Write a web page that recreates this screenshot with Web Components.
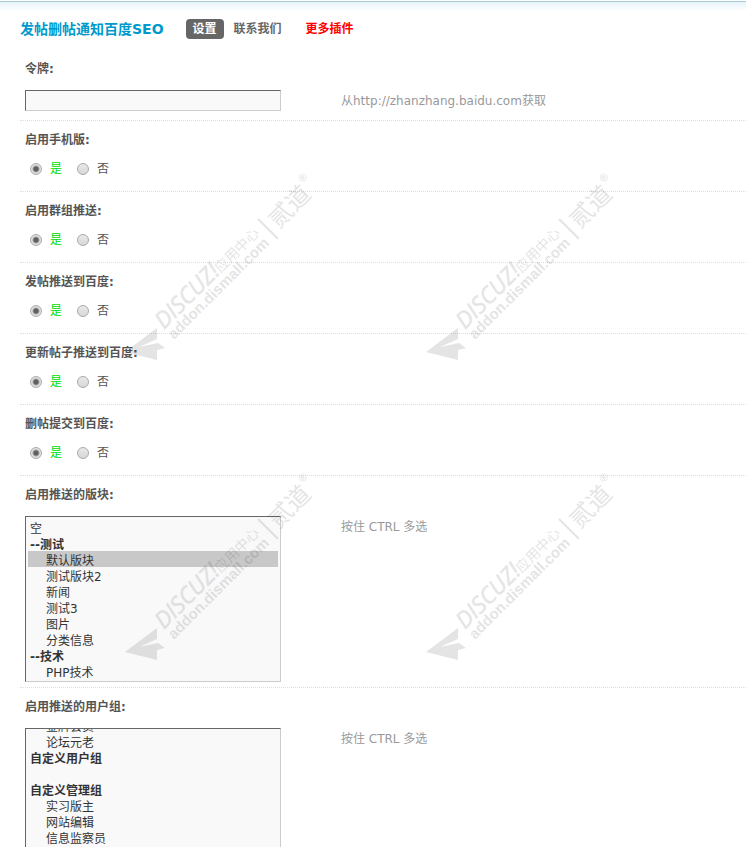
<!DOCTYPE html>
<html lang="zh-CN">
<head>
<meta charset="utf-8">
<title>发帖删帖通知百度SEO</title>
<style>
  body {
    margin: 0;
    background: #fff;
    color: #555;
    font: 12px/16px "DejaVu Sans", "Noto Sans CJK SC", sans-serif;
  }
</style>
</head>
<body>
<admin-page>
  <admin-nav heading="发帖删帖通知百度SEO"></admin-nav>
  <setting-row label="令牌:" tip="从http://zhanzhang.baidu.com获取">
    <token-input label="令牌:"></token-input>
  </setting-row>
  <setting-row label="启用手机版:"><yes-no label="启用手机版:"></yes-no></setting-row>
  <setting-row label="启用群组推送:"><yes-no label="启用群组推送:"></yes-no></setting-row>
  <setting-row label="发帖推送到百度:"><yes-no label="发帖推送到百度:"></yes-no></setting-row>
  <setting-row label="更新帖子推送到百度:"><yes-no label="更新帖子推送到百度:"></yes-no></setting-row>
  <setting-row label="删帖提交到百度:"><yes-no label="删帖提交到百度:"></yes-no></setting-row>
  <setting-row label="启用推送的版块:" tip="按住 CTRL 多选">
    <multi-list name="forums" label="启用推送的版块:"></multi-list>
  </setting-row>
  <setting-row label="启用推送的用户组:" tip="按住 CTRL 多选">
    <multi-list name="groups" label="启用推送的用户组:" scroll="30"></multi-list>
  </setting-row>
</admin-page>

<script>
// 列表数据
const LISTS = {
  forums: [
    { text: '空' },
    { group: '--测试', items: ['默认版块', '测试版块2', '新闻', '测试3', '图片', '分类信息'] },
    { group: '--技术', items: ['PHP技术'] }
  ],
  groups: [
    { group: '会员用户组', items: ['金牌会员', '论坛元老'] },
    { group: '自定义用户组', items: [''] },
    { group: '自定义管理组', items: ['实习版主', '网站编辑', '信息监察员', '审核员'] },
    { group: '系统用户组', items: ['管理员', '超级版主', '版主'] }
  ]
};
const SELECTED = ['默认版块'];

// 页面外框
class AdminPage extends HTMLElement {
  constructor() {
    super();
    this.attachShadow({ mode: 'open' });
  }

  connectedCallback() {
    this.shadowRoot.innerHTML = `
      <style>
        :host {
          display: block;
          position: relative;
          box-sizing: border-box;
          height: 100vh;
          overflow: hidden;
          border-top: 1px solid #fff;
        }
        main {
          padding: 17px 0 0 20px;
          border-top: 1px solid #a9ccd6;
          background: linear-gradient(#e6f3f9, #fff 9px);
        }
      </style>
      <main><slot></slot></main>
      <water-marks></water-marks>
    `;
  }
}
customElements.define('admin-page', AdminPage);

// 标题和导航链接
class AdminNav extends HTMLElement {
  constructor() {
    super();
    this.attachShadow({ mode: 'open' });
  }

  connectedCallback() {
    this.shadowRoot.innerHTML = `
      <style>
        :host { display: flex; align-items: center; height: 20px; margin-bottom: 11px; }
        h1 { margin: 0 22px 0 0; font-size: 14px; line-height: 20px; color: #0099cc; }
        nav { display: flex; align-items: center; }
        a { font-weight: bold; line-height: 20px; color: #666; text-decoration: none; }
        .on { padding: 0 7px; margin-right: 10px; border-radius: 4px; background: #666; color: #fff; }
        .more { margin-left: 24px; color: #f00; }
      </style>
      <h1>${this.getAttribute('heading')}</h1>
      <nav>
        <a class="on" href="#">设置</a>
        <a href="#">联系我们</a>
        <a class="more" href="#">更多插件</a>
      </nav>
    `;
  }
}
customElements.define('admin-nav', AdminNav);

// 一行设置: 标题、控件和提示
class SettingRow extends HTMLElement {
  constructor() {
    super();
    this.attachShadow({ mode: 'open' });
  }

  connectedCallback() {
    this.shadowRoot.innerHTML = `
      <style>
        :host { display: block; padding: 9px 5px 5px; border-bottom: 1px dotted #cfe3ee; }
        h2 { margin: 0 0 11px; font-size: 12px; line-height: 20px; color: #555; }
        div { display: grid; grid-template-columns: 316px 1fr; min-height: 25px; }
        p { margin: 3px 0 0; line-height: 16px; color: #999; }
      </style>
      <h2>${this.getAttribute('label')}</h2>
      <div><slot></slot><p>${this.getAttribute('tip') || ''}</p></div>
    `;
  }
}
customElements.define('setting-row', SettingRow);

// 文本框
class TokenInput extends HTMLElement {
  constructor() {
    super();
    this.attachShadow({ mode: 'open' });
  }

  connectedCallback() {
    this.shadowRoot.innerHTML = `
      <style>
        :host { display: block; }
        input {
          display: block;
          box-sizing: border-box;
          width: 256px;
          height: 21px;
          padding: 2px;
          border: 1px solid;
          border-color: #666 #ccc #ccc #666;
          background: #f9f9f9;
          font: inherit;
        }
      </style>
      <input type="text" aria-label="${this.getAttribute('label')}">
    `;
  }
}
customElements.define('token-input', TokenInput);

// 是 / 否 单选
class YesNo extends HTMLElement {
  constructor() {
    super();
    this.attachShadow({ mode: 'open' });
  }

  connectedCallback() {
    this.shadowRoot.innerHTML = `
      <style>
        :host { display: block; }
        div { display: flex; gap: 15px; padding: 0 5px; }
        label { display: flex; align-items: center; gap: 8px; height: 16px; }
        label:has(:checked) { color: #00dd00; }
        input {
          appearance: none;
          box-sizing: border-box;
          width: 12px;
          height: 12px;
          margin: 0;
          border: 1px solid #aaa;
          border-radius: 50%;
          background: linear-gradient(#e8e8e8, #d8d8d8);
        }
        input:checked { background: radial-gradient(circle, #606060 2px, #e2e2e2 4px); }
      </style>
      <div role="radiogroup" aria-label="${this.getAttribute('label')}">
        <label><input type="radio" name="v" checked>是</label>
        <label><input type="radio" name="v">否</label>
      </div>
    `;
  }
}
customElements.define('yes-no', YesNo);

// 多选列表
class MultiList extends HTMLElement {
  constructor() {
    super();
    this.attachShadow({ mode: 'open' });
  }

  connectedCallback() {
    const option = (t) => `<option${SELECTED.includes(t) ? ' selected' : ''}>${t}</option>`;
    let html = '';
    for (const e of LISTS[this.getAttribute('name')]) {
      html += e.group
        ? `<optgroup label="${e.group}">${e.items.map(option).join('')}</optgroup>`
        : option(e.text);
    }
    this.shadowRoot.innerHTML = `
      <style>
        :host { display: block; }
        select {
          display: block;
          box-sizing: border-box;
          width: 256px;
          height: 166px;
          padding: 2px;
          border: 1px solid;
          border-color: #666 #ccc #ccc #666;
          border-radius: 0;
          outline: 0;
          background: #f9f9f9;
          color: #333;
          font: inherit;
          scrollbar-width: none;
        }
        optgroup { font-weight: bold; }
        option { box-sizing: border-box; height: 16px; min-height: 16px; padding: 0 2px; font-weight: normal; }
        optgroup option { padding-left: 18px; }
        /* 组标题高 18px, 收回到 16px 的行高 */
        optgroup option:first-child { margin-top: -2px; }
        option:checked { background: #c8c8c8 linear-gradient(#c8c8c8, #c8c8c8); color: #333; }
      </style>
      <select multiple size="10" aria-label="${this.getAttribute('label')}">${html}</select>
    `;
    this.shadowRoot.querySelector('select').scrollTop = Number(this.getAttribute('scroll') || 0);
  }
}
customElements.define('multi-list', MultiList);

// 斜向水印
class WaterMarks extends HTMLElement {
  constructor() {
    super();
    this.attachShadow({ mode: 'open' });
  }

  connectedCallback() {
    const mark = `
      <svg viewBox="0 0 200 200" width="200" height="200" aria-hidden="true">
        <path d="M5 187L37 163V174L19 182L38 178L45 183L37 185V195Z"/>
        <g transform="translate(44 165) rotate(-45)">
          <text class="brand" x="0" y="0">DISCUZ!</text>
          <text class="cn" x="80" y="0">应用中心</text>
          <text class="url" x="0" y="14">addon.dismall.com</text>
          <path d="M144 -12h2v28h-2z"/>
          <text class="big" x="152" y="10">贰道</text>
          <text class="reg" x="202" y="-6">®</text>
        </g>
      </svg>`;
    this.shadowRoot.innerHTML = `
      <style>
        :host {
          position: absolute;
          top: 164px;
          left: 120px;
          display: grid;
          grid-template-columns: 301px 301px;
          grid-auto-rows: 300px;
          pointer-events: none;
        }
        svg { display: block; overflow: visible; fill: #000; opacity: .1; }
        .brand { font: italic 23px "Open Sans", sans-serif; stroke: #000; stroke-width: .5; }
        .cn { font: 14px "Noto Sans CJK SC", sans-serif; }
        .url { font: bold 15px "Liberation Sans", sans-serif; }
        .big { font: 24px "Noto Sans CJK SC", sans-serif; }
        .reg { font: bold 11px "Liberation Sans", sans-serif; }
      </style>
      ${mark.repeat(4)}
    `;
  }
}
customElements.define('water-marks', WaterMarks);
</script>
</body>
</html>
